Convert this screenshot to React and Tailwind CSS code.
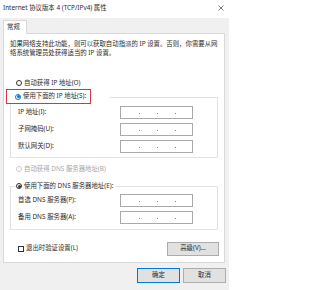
import React from "react";

function Radio({ state }) {
  // state: "off" | "blue" | "on" | "disabled"
  if (state === "blue") {
    return (
      <span className="w-[6px] h-[6px] shrink-0 rounded-full border border-[#0078d7] bg-white flex items-center justify-center">
        <span className="w-[3px] h-[3px] rounded-full bg-[#0078d7]" />
      </span>
    );
  }
  if (state === "on") {
    return (
      <span className="w-[6px] h-[6px] shrink-0 rounded-full border border-[#333333] bg-white flex items-center justify-center">
        <span className="w-[3px] h-[3px] rounded-full bg-[#333333]" />
      </span>
    );
  }
  if (state === "disabled") {
    return <span className="w-[6px] h-[6px] shrink-0 rounded-full border border-[#cccccc] bg-white" />;
  }
  return <span className="w-[6px] h-[6px] shrink-0 rounded-full border border-[#333333] bg-white" />;
}

function IpField() {
  return (
    <div className="w-[73px] h-[13px] border border-[#a9a9a9] bg-white flex items-center pl-[18px] gap-[17px]">
      <span className="w-px h-px mt-[2px] bg-[#888888]" />
      <span className="w-px h-px mt-[2px] bg-[#888888]" />
      <span className="w-px h-px mt-[2px] bg-[#888888]" />
    </div>
  );
}

function FieldRow({ label }) {
  return (
    <div className="flex items-center h-[13px] pl-[7px]">
      <span className="w-[102px] whitespace-nowrap">{label}</span>
      <IpField />
    </div>
  );
}

export default function App() {
  return (
    <div className="w-[229px] h-[290px] overflow-hidden bg-[#f0f0f0] text-[#2b2b2b] text-[6.4px] leading-none font-['Noto_Sans','Noto_Sans_CJK_SC',sans-serif]">
      {/* TITLE BAR */}
      <div className="h-[18px] bg-white flex items-start justify-between pl-[3px] pr-[5px] pt-[4px]">
        <span className="whitespace-nowrap leading-[7px]">Internet 协议版本 4 (TCP/IPv4) 属性</span>
        <svg width="6" height="6" viewBox="0 0 6 6" className="mt-[1px]">
          <path d="M0.5 0.5 L5.5 5.5 M5.5 0.5 L0.5 5.5" stroke="#444" strokeWidth="0.7" />
        </svg>
      </div>

      {/* TABS */}
      <div className="h-[15px] flex pt-[2px] pl-[3px]">
        <div className="relative z-10 h-[14px] w-[24px] bg-white border border-b-0 border-[#d9d9d9] pl-[3px] flex items-center">
          常规
        </div>
      </div>

      {/* PANEL */}
      <div className="ml-[3px] w-[222px] bg-white border border-[#d9d9d9] pt-[5px] pb-[6px]">
        <p className="pl-[6px] leading-[9px] whitespace-nowrap">
          如果网络支持此功能，则可以获取自动指派的 IP 设置。否则，你需要从网
          <br />
          络系统管理员处获得适当的 IP 设置。
        </p>

        <div className="mt-[20px] h-[12px] pl-[12px] flex items-center gap-[2px]">
          <Radio state="off" />
          <span>自动获得 IP 地址(O)</span>
        </div>

        <div className="h-[15px] pl-[2px]">
          <div className="relative z-10 inline-flex bg-white pr-[19px]">
            <div className="h-[15px] w-[85px] border-[1.5px] border-[#d8363c] flex items-center gap-[2px] pl-[8px] bg-white">
              <Radio state="blue" />
              <span className="whitespace-nowrap">使用下面的 IP 地址(S):</span>
            </div>
          </div>
        </div>

        <div className="-mt-[7px] ml-[6px] w-[208px] border border-[#e3e3e3] pt-[8px] pb-[4px] flex flex-col gap-[4px]">
          <FieldRow label="IP 地址(I):" />
          <FieldRow label="子网掩码(U):" />
          <FieldRow label="默认网关(D):" />
        </div>

        <div className="mt-[5px] h-[12px] pl-[12px] flex items-center gap-[2px] text-[#a6a6a6]">
          <Radio state="disabled" />
          <span>自动获得 DNS 服务器地址(B)</span>
        </div>

        <div className="mt-[5px] h-[12px] pl-[12px]">
          <div className="relative z-10 inline-flex h-[12px] items-center gap-[2px] bg-white pr-[3px]">
            <Radio state="on" />
            <span className="whitespace-nowrap">使用下面的 DNS 服务器地址(E):</span>
          </div>
        </div>

        <div className="-mt-[6px] ml-[6px] w-[208px] border border-[#e3e3e3] pt-[7px] pb-[5px] flex flex-col gap-[4px]">
          <FieldRow label="首选 DNS 服务器(P):" />
          <FieldRow label="备用 DNS 服务器(A):" />
        </div>

        <div className="mt-[11px] h-[15px] pl-[14px] pr-[5px] flex items-center justify-between">
          <div className="flex items-center gap-[2px]">
            <span className="w-[6px] h-[6px] border border-[#333333] bg-white" />
            <span>退出时验证设置(L)</span>
          </div>
          <button className="w-[52px] h-[14px] bg-[#e1e1e1] border border-[#adadad] flex items-center justify-center">
            高级(V)...
          </button>
        </div>
      </div>

      {/* FOOTER */}
      <div className="pt-[5px] pr-[3px] flex justify-end gap-[3px]">
        <button className="w-[43px] h-[15px] bg-[#e1e1e1] border border-[#0078d7] flex items-center justify-center">
          确定
        </button>
        <button className="w-[43px] h-[15px] bg-[#e1e1e1] border border-[#adadad] flex items-center justify-center">
          取消
        </button>
      </div>
    </div>
  );
}
